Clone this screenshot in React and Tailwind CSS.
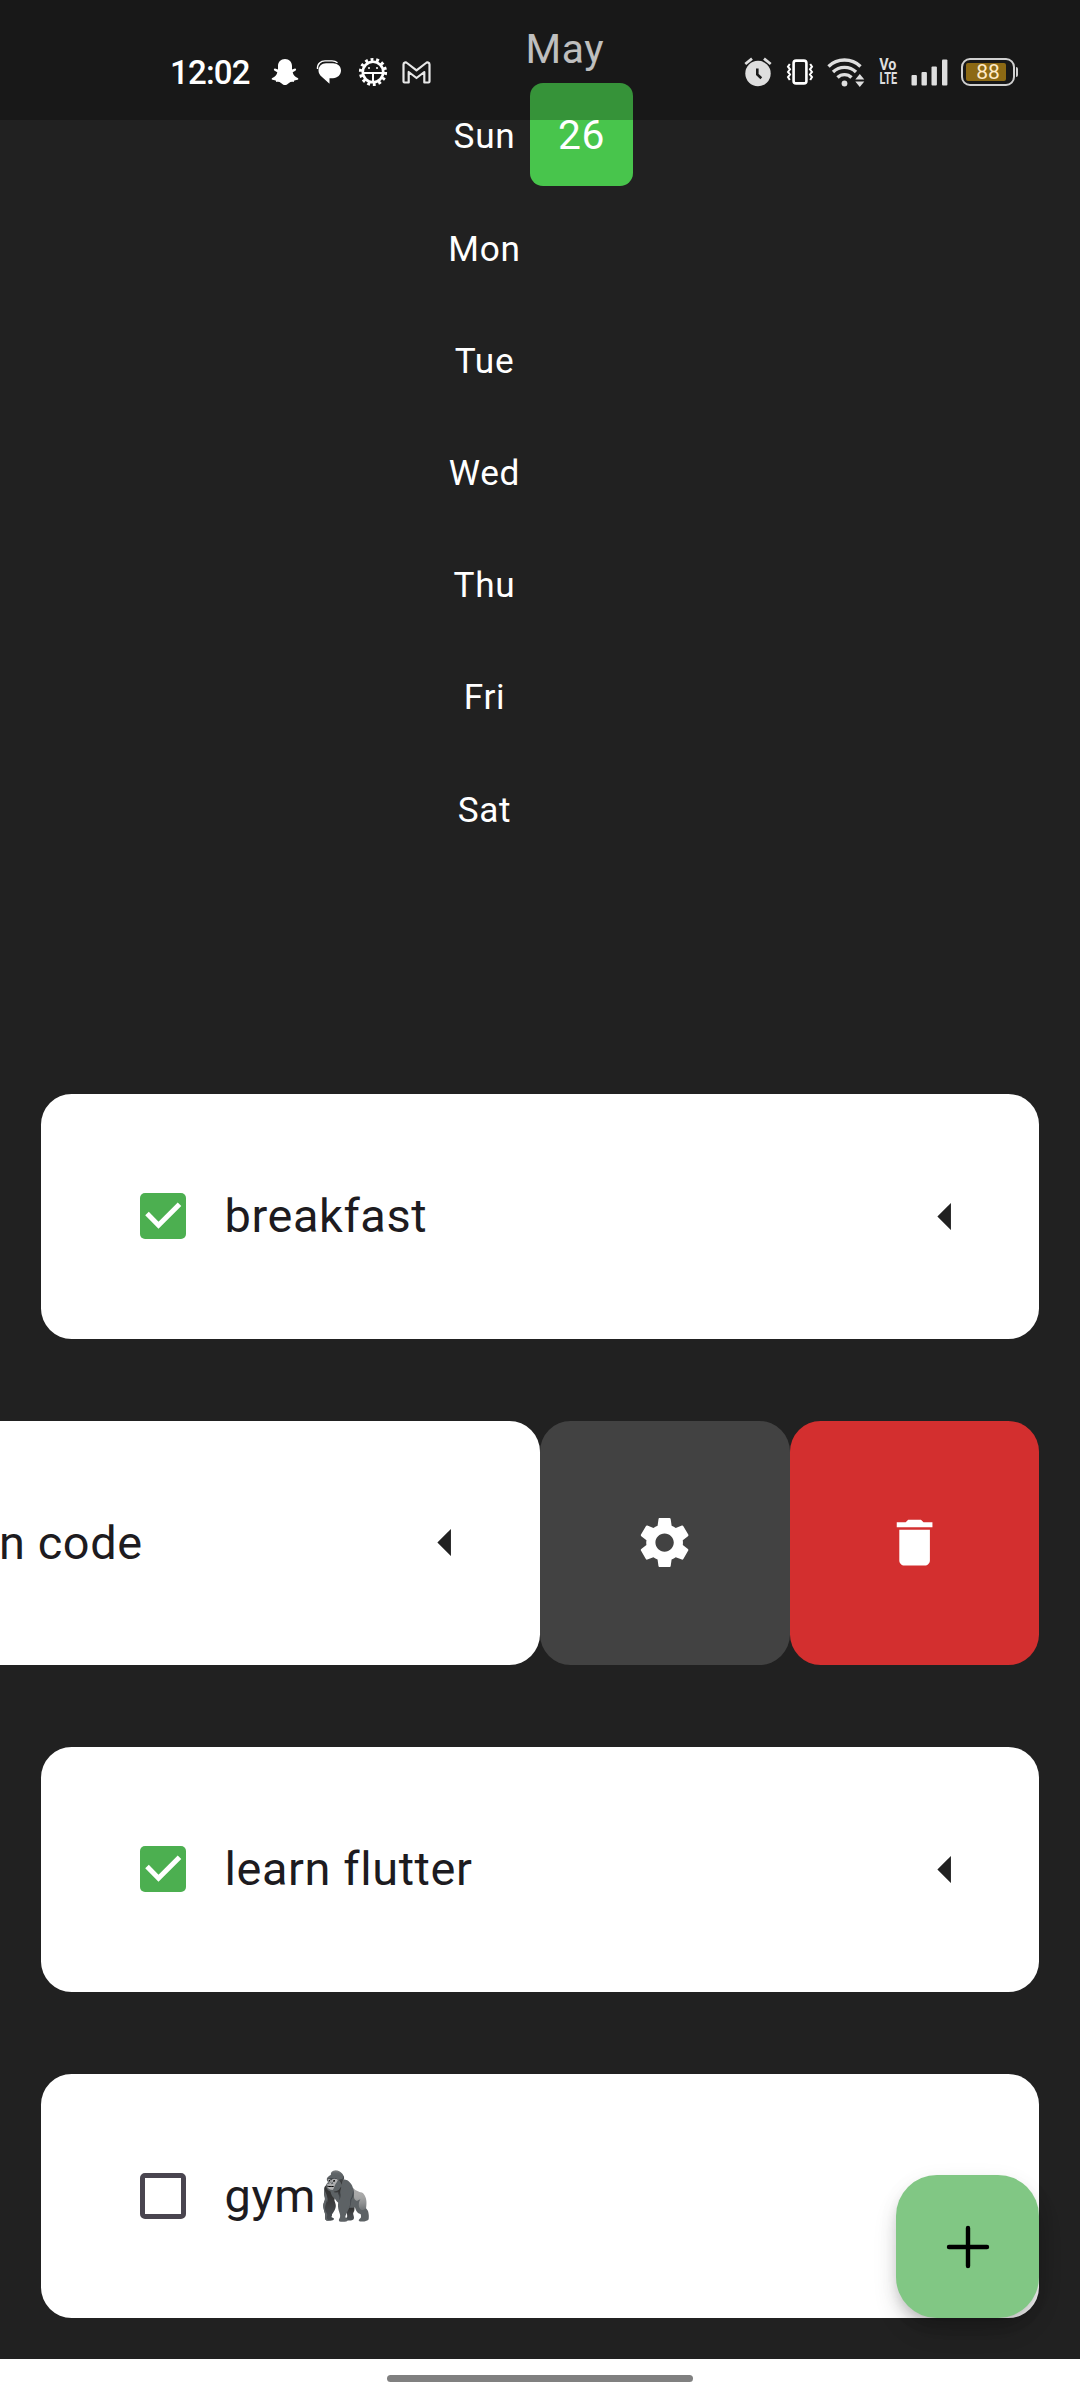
import React from "react";
import { MdSettings, MdDelete, MdArrowLeft } from "react-icons/md";

const DAYS = ["Sun", "Mon", "Tue", "Wed", "Thu", "Fri", "Sat"];

function Snap() {
  return (
    <svg className="w-[28px] h-[28px]" viewBox="0 0 28 28" fill="#fff">
      <path d="M14 1c4.200 0 7 3 7 7v3.500l3-.9c1.300 0 1.600 1.500.4 2.200l-2.700 1.400c.6 2.800 2.300 4.500 5 5.700 1 .5.8 1.400-.2 1.800l-3.200.9-.6 1.400c-2-.4-3.300-.2-4.700.9C16.600 26 15.500 27 14 27s-2.600-1-4-2.100c-1.400-1.100-2.700-1.300-4.700-.9l-.6-1.400-3.200-.9c-1-.4-1.200-1.300-.2-1.800 2.700-1.200 4.400-2.900 5-5.700L3.600 12.800c-1.200-.7-.9-2.200.4-2.200l3 .9V8c0-4 2.800-7 7-7z" />
    </svg>
  );
}

function Chat() {
  return (
    <svg className="w-[26px] h-[24px]" viewBox="0 0 26 24" fill="none">
      <path d="M1.500 9C1 3.500 5 .9 9 .9h7c2.500 0 4 .6 5.500 1.800" stroke="#fff" strokeWidth="1.400" />
      <path d="M10 3.300h7c4.500 0 8 3 8 7.200s-3.500 7.700-8 7.700h-3.500v5.500L6 17C3.500 14.800 2.500 12.800 2.500 10.500c0-4 3.200-7.200 7.500-7.200z" fill="#fff" />
    </svg>
  );
}

function Cog() {
  return (
    <svg className="w-[30px] h-[30px]" viewBox="0 0 30 30" fill="none">
      <circle cx="15" cy="15" r="12.300" stroke="#fff" strokeWidth="3.600" strokeDasharray="2.800 2.720" />
      <circle cx="15" cy="15" r="10.200" stroke="#fff" strokeWidth="2.600" />
      <path d="M5.500 16h19M15 16v9" stroke="#fff" strokeWidth="2" />
      <circle cx="11" cy="11" r="1" fill="#fff" />
      <circle cx="19" cy="11" r="1" fill="#fff" />
    </svg>
  );
}

function Mail() {
  return (
    <svg className="w-[29px] h-[23px]" viewBox="0 0 29 23" fill="none">
      <path
        d="M1.500 20.500V3.500C1.500 1.500 3.800 1 5 2l9.500 7.300L24 2c1.200-1 3.500-.5 3.500 1.500v17c0 .6-.3 1-1 1h-4.200v-10.500L14.500 17l-7.800-6v10.500H2.500c-.7 0-1-.4-1-1z"
        stroke="#e8e8e8"
        strokeWidth="2.200"
        strokeLinejoin="round"
      />
    </svg>
  );
}

function Alarm() {
  return (
    <svg className="w-[28px] h-[30px]" viewBox="0 0 28 30" fill="none">
      <circle cx="14" cy="16.500" r="12.700" fill="#dedede" />
      <path d="M1.300 7 8 1.700M26.700 7 20 1.700" stroke="#dedede" strokeWidth="2.800" />
      <path d="M13.300 11.500v6l4 3.700" stroke="#1a1a1a" strokeWidth="2.600" />
    </svg>
  );
}

function Vibrate() {
  return (
    <svg className="w-[28px] h-[26px]" viewBox="0 0 28 26" fill="none" stroke="#fff">
      <rect x="7.600" y="1.600" width="12.800" height="22.800" rx="2.500" strokeWidth="2.600" />
      <path d="M3.800 5 2 7.700l2 2.600-2 2.600 2 2.600-2 2.600L3.800 21M24.200 5l1.800 2.700-2 2.600 2 2.600-2 2.600 2 2.600-1.800 2.900" strokeWidth="2" />
    </svg>
  );
}

function Wifi() {
  return (
    <svg className="w-[38px] h-[31px]" viewBox="0 0 38 31" fill="none" stroke="#dedede">
      <path d="M1.500 9.500a23 23 0 0 1 32 0" strokeWidth="3.400" />
      <path d="M6 15a16.500 16.500 0 0 1 23 0" strokeWidth="3.400" />
      <path d="M10.500 20.500a10 10 0 0 1 14 0" strokeWidth="3.400" />
      <circle cx="17.500" cy="26.500" r="2.900" fill="#dedede" stroke="none" />
      <path d="m28.300 22.500 4.500-5.500 4.500 5.500zM28.300 24.500l4.500 5.500 4.500-5.500z" fill="#dedede" stroke="none" />
    </svg>
  );
}

function Signal() {
  return (
    <svg className="w-[37px] h-[27px]" viewBox="0 0 37 27" fill="#dedede">
      <rect x="0.500" y="16" width="5.400" height="10.500" rx="1" />
      <rect x="10.500" y="13" width="5.400" height="13.500" rx="1" />
      <rect x="20.500" y="7.500" width="5.400" height="19" rx="1" />
      <rect x="31" y="0.500" width="5.400" height="26" rx="1" />
    </svg>
  );
}

function StatusBar() {
  return (
    <header className="absolute inset-x-0 top-0 h-[120px] bg-black/25 text-white">
      <div className="flex h-[144px] items-center">
        <span className="ml-[170px] w-[82px] whitespace-nowrap text-[33px] font-medium leading-none tracking-[-0.800px]">12:02</span>
        <div className="ml-[19px]"><Snap /></div>
        <div className="ml-[17px]"><Chat /></div>
        <div className="ml-[16px]"><Cog /></div>
        <div className="ml-[14px]"><Mail /></div>
        <div className="ml-[313px]"><Alarm /></div>
        <div className="ml-[14px]"><Vibrate /></div>
        <div className="ml-[13px]"><Wifi /></div>
        <div className="ml-[13px] flex w-[20px] flex-col items-center text-[16.500px] font-bold leading-[14px] text-[#dedede]">
          <span className="scale-x-[0.87]">Vo</span>
          <span className="scale-x-[0.66]">LTE</span>
        </div>
        <div className="ml-[13px]"><Signal /></div>
        <div className="ml-[13px] flex h-[28px] w-[54px] items-center rounded-[9px] border-2 border-[#d0d0d0] p-[3px]">
          <div className="flex h-[18px] w-[40px] items-center justify-center rounded-[2px] bg-[#8c6914] pl-[4px] text-[21px] leading-none text-[#ffebc8]">88</div>
        </div>
        <div className="ml-px h-[10px] w-[2px] rounded-r bg-[#d0d0d0]" />
      </div>
    </header>
  );
}

function Checkbox({ checked }) {
  if (!checked) return <div className="size-[46px] rounded-[5px] border-[5px] border-[#49454f]" />;
  return (
    <div className="size-[46px] rounded-[5px] bg-[#4caf50]">
      <svg viewBox="0 0 46 46" fill="none" stroke="#fff" strokeWidth="5">
        <path d="M7 20.500 18.500 32.200 39.500 11.200" />
      </svg>
    </div>
  );
}

function Task({ label, checked, arrow = true }) {
  return (
    <li className="flex h-[244.500px] items-center rounded-[30.6px] bg-white pl-[99.200px] pr-[61.500px] text-[#1d1b20]">
      <Checkbox checked={checked} />
      <span className="ml-[38.500px] flex-1 text-[46.900px] tracking-[0.600px]">{label}</span>
      {arrow && <MdArrowLeft className="size-[65px] text-[#212121]" />}
    </li>
  );
}

export default function App() {
  return (
    <div className="relative flex h-[2400px] w-[1080px] flex-col overflow-hidden bg-[#212121] font-[Roboto,sans-serif]">
      <section className="flex h-[1094px] flex-col pt-[22px] text-white">
        <div className="ml-[525.500px] h-[56px] text-[40.800px] leading-[54px] tracking-[0.600px]">May</div>
        <div className="flex flex-col">
          {DAYS.map((day) => (
            <div key={day} className="flex h-[112.200px] items-center">
              <div className="ml-[438px] w-[92px] pl-px text-center text-[35.200px] leading-none tracking-[0.700px] pt-[6px]">{day}</div>
              {day === "Sun" && (
                <div className="flex size-[103px] items-center justify-center rounded-[13px] bg-[#48c54c] pt-[3px] text-[40.800px] leading-none tracking-[0.600px]">
                  26
                </div>
              )}
            </div>
          ))}
        </div>
      </section>

      <ul className="flex flex-col gap-[82.100px] px-[40.800px]">
        <Task label="breakfast" checked />
        <li className="-ml-[40.800px] flex h-[244.500px]">
          <div className="flex flex-1 items-center rounded-r-[30.600px] bg-white pr-[62px] text-[#1d1b20]">
            <span className="-ml-[1px] flex-1 text-[46.900px] tracking-[0.600px]">n code</span>
            <MdArrowLeft className="size-[65px] text-[#212121]" />
          </div>
          <div className="flex w-[249.600px] items-center justify-center rounded-[30.600px] bg-[#424242]">
            <MdSettings className="size-[61.200px] text-white" />
          </div>
          <div className="flex w-[249.600px] items-center justify-center rounded-[30.600px] bg-[#d32f2f]">
            <MdDelete className="size-[61.200px] text-white" />
          </div>
        </li>
        <Task label="learn flutter" checked />
        <Task label="gym🦍" arrow={false} />
      </ul>

      <button className="absolute left-[896.400px] top-[2175.400px] flex size-[142.800px] items-center justify-center rounded-[41px] bg-[#81c784] shadow-[0_8px_13px_-3px_rgba(0,0,0,0.18),0_14px_24px_rgba(0,0,0,0.12),0_3px_26px_rgba(0,0,0,0.03)]">
        <svg className="size-[44px]" viewBox="0 0 44 44" stroke="#000" strokeWidth="4.400" strokeLinecap="round">
          <path d="M22 3v38M3 22h38" />
        </svg>
      </button>

      <footer className="absolute inset-x-0 bottom-0 flex h-[41px] justify-center bg-white pt-[16px]">
        <div className="h-[7px] w-[306px] rounded-full bg-[#808080]" />
      </footer>

      <StatusBar />
    </div>
  );
}
